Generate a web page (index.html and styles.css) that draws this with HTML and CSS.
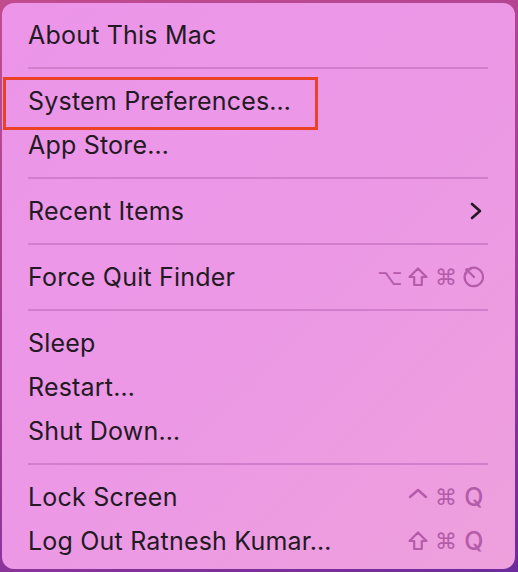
FILE: index.html
```
<!DOCTYPE html>
<html lang="en">

<head>
    <meta charset="UTF-8">
    <title>Apple Menu</title>
    <link rel="stylesheet" href="styles.css">
</head>

<body>
    <div class="menu">
        <div class="item"><span class="label">About This Mac</span></div>
        <div class="sep"></div>
        <div class="item marked"><span class="label">System Preferences…</span></div>
        <div class="item"><span class="label">App Store…</span></div>
        <div class="sep"></div>
        <div class="item">
            <span class="label">Recent Items</span>
            <svg class="chevron" width="14" height="18" viewBox="0 0 14 18">
                <path d="M3 2 L11 9 L3 16" fill="none" stroke="#231a23" stroke-width="2.6" stroke-linecap="round" stroke-linejoin="round"/>
            </svg>
        </div>
        <div class="sep"></div>
        <div class="item">
            <span class="label">Force Quit Finder</span>
            <span class="keys">
                <span class="key">⌥</span>
                <span class="key">
                    <svg width="22" height="22" viewBox="0 0 22 22">
                        <path d="M11 2.5 L19.5 11 L14.8 11 L14.8 19 L7.2 19 L7.2 11 L2.5 11 Z" fill="none" stroke="#b45ba9" stroke-width="2.2" stroke-linejoin="round"/>
                    </svg>
                </span>
                <span class="key">⌘</span>
                <span class="key">
                    <!--escape key glyph-->
                    <svg width="24" height="24" viewBox="0 0 24 24">
                        <path d="M8 3.6 A9.2 9.2 0 1 1 3.4 8.2" fill="none" stroke="#b45ba9" stroke-width="2.2" stroke-linecap="round"/>
                        <path d="M4.8 4.8 L12 12" fill="none" stroke="#b45ba9" stroke-width="2.2" stroke-linecap="round"/>
                        <path d="M4.4 4.4 L4.4 8.4 M4.4 4.4 L8.4 4.4" fill="none" stroke="#b45ba9" stroke-width="2.2" stroke-linecap="round"/>
                    </svg>
                </span>
            </span>
        </div>
        <div class="sep"></div>
        <div class="item"><span class="label">Sleep</span></div>
        <div class="item"><span class="label">Restart…</span></div>
        <div class="item"><span class="label">Shut Down…</span></div>
        <div class="sep"></div>
        <div class="item">
            <span class="label">Lock Screen</span>
            <span class="keys">
                <span class="key">
                    <svg width="22" height="22" viewBox="0 0 22 22">
                        <path d="M3 11 L11 4 L19 11" fill="none" stroke="#b45ba9" stroke-width="2.4" stroke-linecap="round" stroke-linejoin="round"/>
                    </svg>
                </span>
                <span class="key">⌘</span>
                <span class="key letter">Q</span>
            </span>
        </div>
        <div class="item">
            <span class="label">Log Out Ratnesh Kumar…</span>
            <span class="keys">
                <span class="key">
                    <svg width="22" height="22" viewBox="0 0 22 22">
                        <path d="M11 2.5 L19.5 11 L14.8 11 L14.8 19 L7.2 19 L7.2 11 L2.5 11 Z" fill="none" stroke="#b45ba9" stroke-width="2.2" stroke-linejoin="round"/>
                    </svg>
                </span>
                <span class="key">⌘</span>
                <span class="key letter">Q</span>
            </span>
        </div>
    </div>
</body>

</html>
```

FILE: styles.css
```
* {
    margin: 0;
    padding: 0;
    box-sizing: border-box;
}

body {
    width: 518px;
    height: 572px;
    overflow: hidden;
    padding: 3px 3px 3px 2px;
    background: linear-gradient(160deg, #c04c8e 0%, #a43c98 55%, #6c2a9c 100%);
    font-family: Inter, "Noto Sans", sans-serif;
}

.menu {
    height: 566px;
    border-radius: 12px;
    padding: 10px 0 6px;
    background: linear-gradient(135deg, #ec95e9 0%, #ec98e6 50%, #eea0dc 100%);
    color: #231a23;
}

.item {
    position: relative;
    display: flex;
    align-items: center;
    justify-content: space-between;
    height: 44px;
    padding: 0 27px 0 26px;
    font-size: 25px;
    letter-spacing: 0.2px;
}

.label {
    white-space: nowrap;
}

.sep {
    height: 2px;
    margin: 10px 27px 10px 26px;
    background: #d27ecd;
}

.marked::after {
    content: "";
    position: absolute;
    left: 1px;
    top: -2px;
    width: 309px;
    height: 47px;
    border: 3px solid #ea4127;
}

.chevron {
    margin-right: 5px;
}

.keys {
    display: flex;
    color: #b45ba9;
}

.key {
    width: 28px;
    display: flex;
    justify-content: center;
    align-items: center;
    font-family: "DejaVu Sans", sans-serif;
    font-size: 22px;
}

.key svg {
    display: block;
}

.key.letter {
    font-family: Inter, sans-serif;
    font-size: 25px;
    font-weight: 500;
}
```
